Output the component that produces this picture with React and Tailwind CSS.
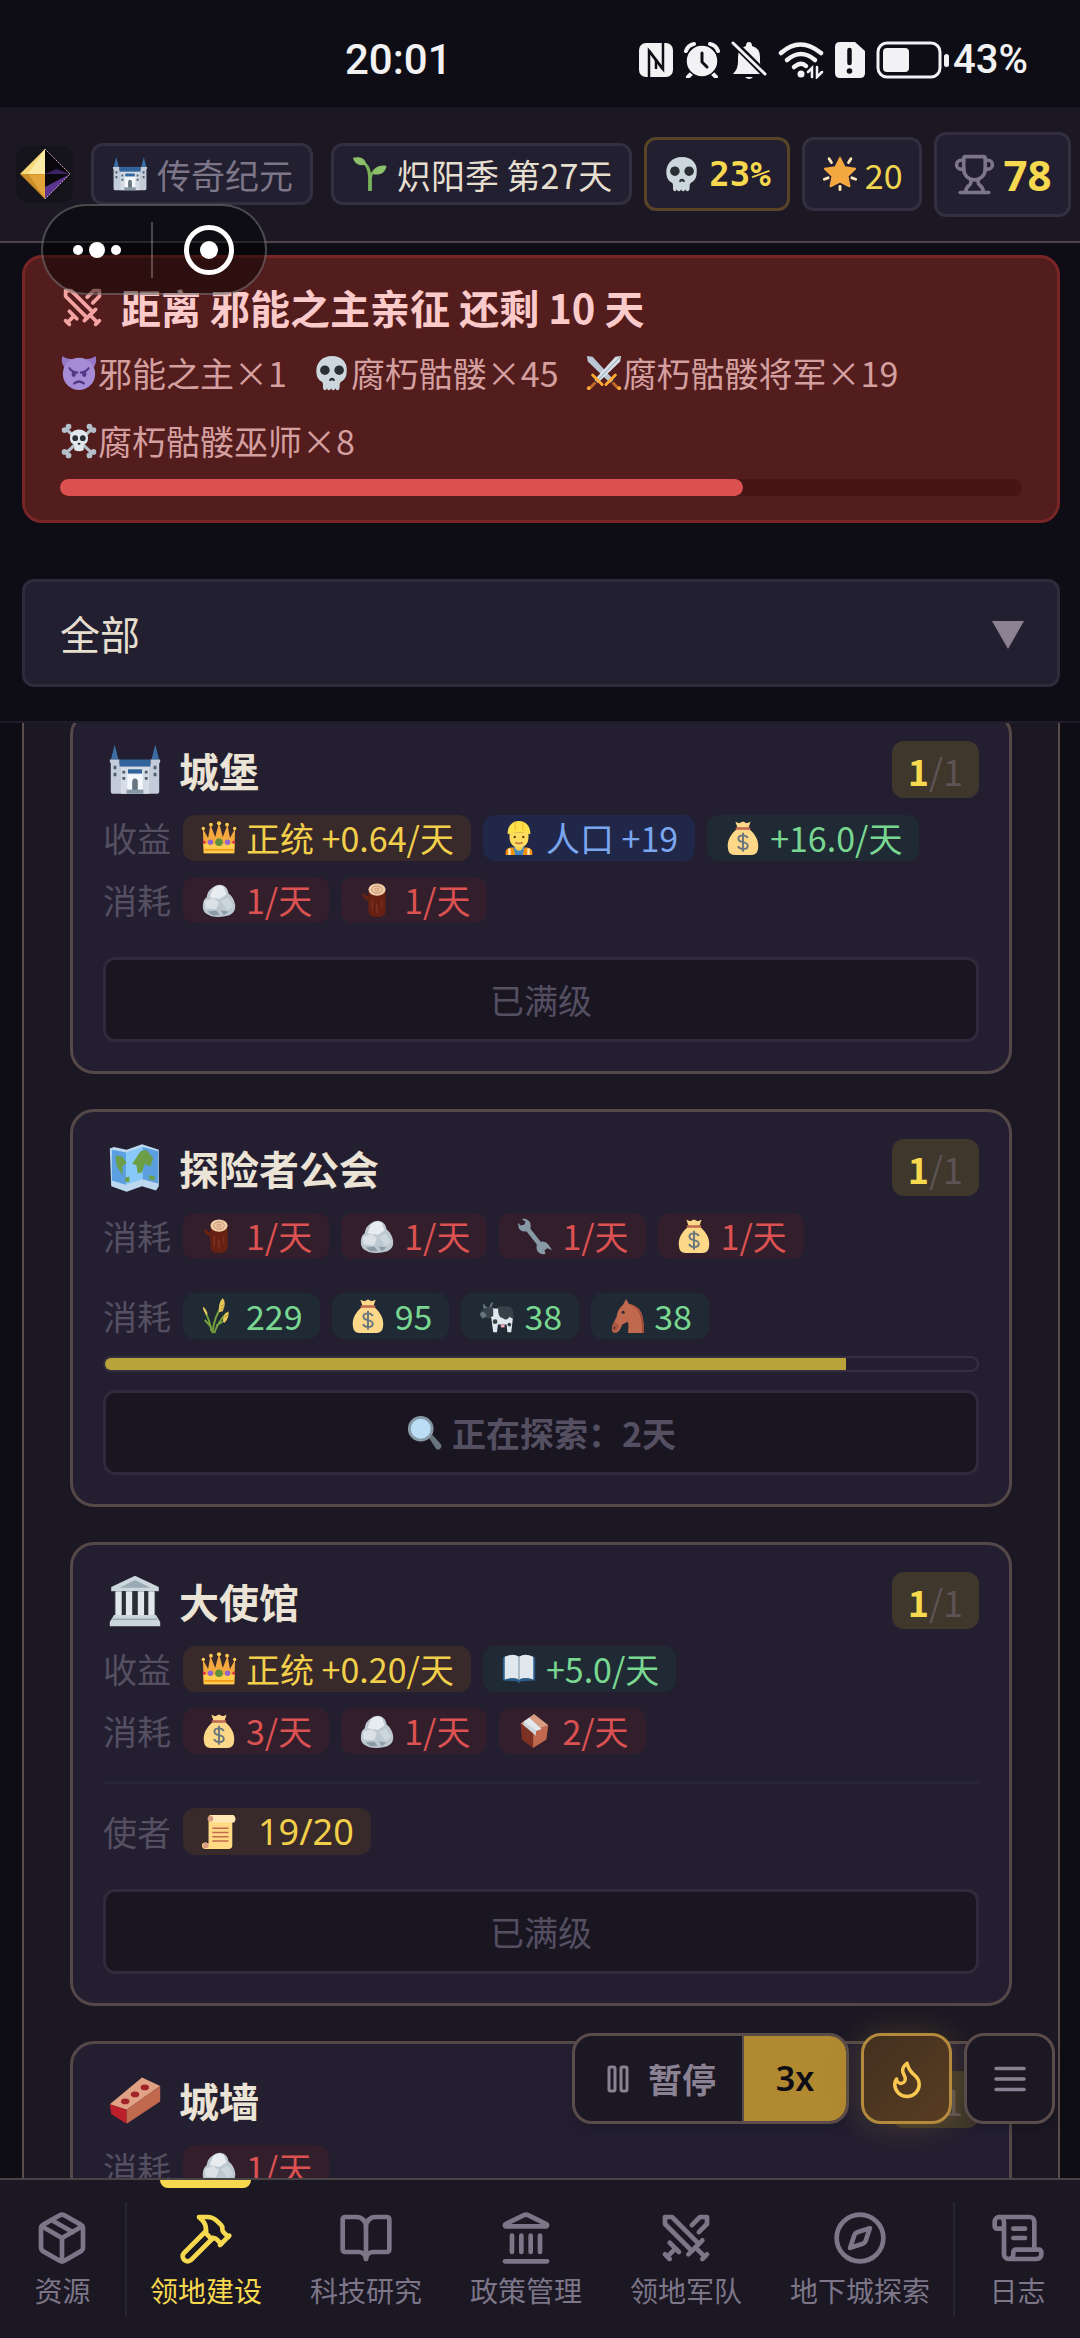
import { useLayoutEffect, useRef, useState } from 'react'
import { BookOpen, Compass, Flame, Hammer, Landmark, Package, ScrollText, Swords, Trophy } from 'lucide-react'

const glyphs = {
  castle: (
    <>
      <path d="M3.5 0 0.8 10.5H6.2ZM32.5 0 29.8 10.5h5.4Z" fill="#3a6ea5" />
      <path d="M0 10.5h7V14h22v-3.500h7V12l-.7 1.500V33.500q0 1.500-1.500 1.500H2.200Q.7 35 .7 33.500V13.500L0 12Z" fill="#c3ccd8" />
      <path d="M7 10.500h22v5H7Z" fill="#31639c" />
      <path d="M8 16h20v19H8Z" fill="#d5dce5" />
      <path d="M12.500 21h11v12h-11Z" fill="#f4f8fc" />
      <path d="M13 17.500h10v3H13Z" fill="#31639c" />
      <path d="M16 33v-6.500a2 2.500 0 0 1 4 0V33Z" fill="#66757f" />
      <path d="M12 32h12v3H12Z" fill="#8899a6" />
      <path d="M2.700 15h2v2.500h-2ZM2.700 20h2v2.500h-2ZM31.300 15h2v2.500h-2ZM31.300 20h2v2.500h-2ZM9 18.500h2v2H9ZM9 23h2v2H9ZM25 18.500h2v2h-2ZM25 23h2v2h-2Z" fill="#4c5f73" />
    </>
  ),
  sprout: (
    <>
      <path d="M16 36V21C15.500 12 13 8 7 5l1-2c7 3 10 7 11 14 2-4 5-6 9-7l1 2c-6 2-8.500 6-9 11v13Z" fill="#78b159" />
      <path d="M0 1C7-1 13 1 14 8 7 10 2 8 0 1ZM35.500 9.500C34 17 28 20 21 18 22 11 28 8 35.500 9.500Z" fill="#8cc06b" />
    </>
  ),
  skull: (
    <>
      <path d="M18 0C7.500 0 1.500 7 1.500 16c0 5 1.500 9 5.500 11 2 1 1.500 3 1.500 6 0 4 4 4 4 .5 0 3.500 4.500 3.500 4.500 0 0 3.500 4.500 3.500 4.500 0 0 3.500 4.500 3.500 4.500-.5 0-3 0-5 1.800-6 4.200-2 5.700-6 5.700-11C34.500 7 28.500 0 18 0Z" fill="#ccd6dd" />
      <circle cx="10.500" cy="15" r="5" fill="#292f33" />
      <circle cx="25.500" cy="15" r="5" fill="#292f33" />
      <path d="M15 26c0-4 6-4 6 0-1 1.200-2 .5-3-.6-1 1.100-2 1.800-3 .6Z" fill="#292f33" />
    </>
  ),
  star: (
    <>
      <path d="m18 1 4.800 9.700L34 12.500l-8 7.600 2 10.900-10-5-10 5 2-10.900-8-7.600 11.200-1.800Z" fill="#f4a940" stroke="#f4a940" strokeWidth="2" strokeLinejoin="round" />
      <path d="M18 31v3.500M6.500 2l2.500 4M29.500 2 27 6M1.500 23.500l4-1.500M34.500 23.500l-4-1.500" stroke="#ffe8b6" strokeWidth="3" strokeLinecap="round" />
    </>
  ),
  devil: (
    <>
      <path d="M.5 0Q-1.500 8 4 14L11 3Q5 4 .5 0ZM35.500 0q2 8-3.500 14L25 3q6 1 10.500-3Z" fill="#9578c8" />
      <circle cx="18" cy="19" r="17" fill="#a68bd6" />
      <path d="M8 13q2.500 4 8 4.500M28 13q-2.500 4-8 4.500M13 29q5-4 10 0" stroke="#553788" strokeWidth="2.400" strokeLinecap="round" fill="none" />
      <ellipse cx="12.500" cy="19" rx="2.200" ry="3" fill="#553788" />
      <ellipse cx="23.500" cy="19" rx="2.200" ry="3" fill="#553788" />
    </>
  ),
  blades: (
    <>
      <path d="M0 0 6 1 28 25l-3.500 3.500L1 6Z" fill="#b8c7d3" />
      <path d="M36 0 30 1 8 25l3.500 3.500L35 6Z" fill="#d7e1e8" />
      <path d="M35.500.5 10 27" stroke="#8899a6" strokeWidth="1" />
      <path d="m20 30 10-10M16 30 6 20" stroke="#ffac33" strokeWidth="3" strokeLinecap="round" />
      <path d="m27 28 6 6M9 28l-6 6" stroke="#be6d22" strokeWidth="3" />
      <circle cx="34" cy="34" r="2" fill="#ffac33" />
      <circle cx="2" cy="34" r="2" fill="#ffac33" />
    </>
  ),
  bones: (
    <>
      <path d="m4 5 28 26M32 5 4 31" stroke="#b4c0c9" strokeWidth="3.500" />
      <g fill="#b4c0c9">
        <circle cx="2.800" cy="6.500" r="3" /><circle cx="7" cy="2.800" r="3" />
        <circle cx="33.200" cy="6.500" r="3" /><circle cx="29" cy="2.800" r="3" />
        <circle cx="2.800" cy="29.500" r="3" /><circle cx="7" cy="33.200" r="3" />
        <circle cx="33.200" cy="29.500" r="3" /><circle cx="29" cy="33.200" r="3" />
      </g>
      <path d="M18 6c-6 0-9.500 4-9.500 9 0 3.500 1.500 5.500 4 6.500.8 1 .5 3 .5 6q5 2.500 10 0c0-3-.3-5 .5-6 2.500-1 4-3 4-6.500 0-5-3.500-9-9.500-9Z" fill="#e1e8ed" />
      <circle cx="14" cy="15" r="3" fill="#292f33" />
      <circle cx="22" cy="15" r="3" fill="#292f33" />
      <ellipse cx="18" cy="21" rx="1.500" ry="1.200" fill="#292f33" />
    </>
  ),
  crown: (
    <>
      <path d="M2 34 1 8l5.500 10L9 4l5 13 4-15 4 15 5-13 2.500 14L35 8l-1 26Z" fill="#f4a940" />
      <path d="m2 34-.5-10h33L34 34Z" fill="#ffcc4d" />
      <g fill="#ffcc4d">
        <circle cx="1.500" cy="8" r="1.800" /><circle cx="9.500" cy="4" r="2" /><circle cx="18" cy="2.500" r="2.200" />
        <circle cx="26.500" cy="4" r="2" /><circle cx="34.500" cy="8" r="1.800" />
      </g>
      <circle cx="18" cy="22.500" r="4" fill="#5c913b" />
      <circle cx="9" cy="22.500" r="2.800" fill="#9266cc" />
      <circle cx="27" cy="22.500" r="2.800" fill="#9266cc" />
      <circle cx="2.500" cy="22.500" r="1.500" fill="#dd2e44" />
      <circle cx="33.500" cy="22.500" r="1.500" fill="#dd2e44" />
      <path d="M2.500 30.500h31" stroke="#f4900c" strokeWidth="1.500" />
    </>
  ),
  worker: (
    <>
      <path d="M4 36v-3q0-4 5-5h18q5 1 5 5v3Z" fill="#f4900c" />
      <path d="M12 27h12l-2 9h-8Z" fill="#4289c1" />
      <path d="M8 29v7M28 29v7" stroke="#ffe8b6" strokeWidth="2.500" />
      <path d="M14 23h8v6q-4 5-8 0Z" fill="#f9ca55" />
      <path d="M8 12v5c0 7 4 11 10 11s10-4 10-11v-5Z" fill="#ffdc5d" />
      <path d="M6 14C6 5 11 0 18 0s12 5 12 14q-12-4-24 0Z" fill="#ffe14d" />
      <path d="M14 1v9M22 1v9" stroke="#f4c430" strokeWidth="1.500" />
      <circle cx="13.500" cy="17" r="1.300" fill="#664500" />
      <circle cx="22.500" cy="17" r="1.300" fill="#664500" />
      <path d="M14 22.500q4 2.500 8 0" stroke="#c1694f" strokeWidth="1.500" fill="none" />
    </>
  ),
  bag: (
    <>
      <path d="M12 8C4 15 1.500 21 2 28q.5 8 7 8h18q6.500 0 7-8c.5-7-2-13-10-20Z" fill="#fdd888" />
      <path d="m10 1 4 1.500L18 .5l4 2L26 1l-2.500 7h-11Z" fill="#fdd888" />
      <path d="M11.500 8h13" stroke="#bf6952" strokeWidth="2.500" strokeLinecap="round" />
      <path d="M23 18q-1.500-2.800-5-2.800-4.800 0-4.800 3.300 0 3 4.800 3.800 5 .8 5 4t-5 3.300q-4 0-5.200-3M18 12.500v20" stroke="#67757f" strokeWidth="2" fill="none" />
    </>
  ),
  rock: (
    <>
      <path d="M11 5q6-5 12-2 4 2 5 8 6 5 7 12 1 8-6 11-10 3-19 1Q0 32 1 24q0-6 4-9 1-7 6-10Z" fill="#bcc7d0" />
      <path d="M12 5q6-4 11-1l3 8-7 5-11-2Z" fill="#e6ecf0" />
      <path d="m3 19 9-3 6 4-3 8-11-1Z" fill="#dbe2e7" />
      <path d="m20 19 7-4 6 9-6 5Z" fill="#ccd6dd" />
      <path d="m6 30 9-1 4 5H11ZM20 29l8 1-5 4Z" fill="#8b9aa7" />
    </>
  ),
  log: (
    <>
      <path d="M9 8v22q1 6 9 6t9-6V8Z" fill="#662113" />
      <path d="m10 20-6-4-2-4 2-1 6 5Z" fill="#662113" />
      <path d="M13 18v11M18 22v10M23 19v6" stroke="#853425" strokeWidth="1.200" />
      <ellipse cx="18" cy="7" rx="9" ry="6.500" fill="#f0cfa8" />
      <ellipse cx="18" cy="7" rx="5.500" ry="3.800" fill="none" stroke="#c1886b" strokeWidth="1" />
      <ellipse cx="18" cy="7" rx="2.300" ry="1.500" fill="none" stroke="#c1886b" strokeWidth="1" />
    </>
  ),
  map: (
    <>
      <path d="m0 4 3-1 9 2 11-4 12 4v26l-2 3-10-3-11 4L1 31Z" fill="#bdd7ee" />
      <path d="m1.500 5 10 2 12-4 11 3v23l-11-3-12 4-10-3Z" fill="#88c9f9" />
      <path d="m23.500 3 11 3v23l-11-3ZM1.500 5l10 2v23l-10-3Z" fill="#5c9fe0" />
      <path d="m4 9 5 1 3 4-3 3v6l-4-6ZM16 15l6-9 4-1 5 6-2 6-4-2-2 6-3 1-1-6ZM28 23l4 1v3l-4-1ZM11 25l3-1v4h-3Z" fill="#6b9e47" />
    </>
  ),
  wrench: (
    <path d="M4 0q6-1 9 4 1 3 0 6l11 14q5-1 8 3l4 6-5-2-3 2 1 4q-6 1-9-4-1-3 0-6L9 13q-5 1-8-3L0 4l3 3 4-1 1-3Z" fill="#8899a6" />
  ),
  wheat: (
    <>
      <path d="M11 36Q13 18 22 6M13 36Q17 24 26 15M10 34Q8 22 4 15M3 22l7 8M15 28l7-4" stroke="#77a43c" strokeWidth="2" fill="none" />
      <path d="M18 14Q17 4 22-1q4 5 0 14ZM22 24q0-8 6-11 1 7-4 12ZM5 17q-4-4-4-9 4 3 5 8Z" fill="#e6c75a" />
      <path d="m20 8 3-2M20 11l3-2M24 19l3-2" stroke="#b58c2c" strokeWidth="1" />
    </>
  ),
  cow: (
    <>
      <path d="M10 10h20q5 1 5 8l-2 17h-4l-1-8h-9l-1 8h-4l-2-15-5-3-4-3 3-6Z" fill="#e1e8ed" />
      <path d="M19 8h12q5 2 4 13l-4-2q-3 5-7 1-5 1-5-12ZM1 13l5-4 4-1 4 3v7l-5 3-6-3Z" fill="#38424a" />
      <path d="m5 10-1-4M11 9l2-5" stroke="#66757f" strokeWidth="2" />
      <circle cx="16" cy="24" r="2.500" fill="#38424a" />
      <circle cx="31" cy="27" r="2" fill="#38424a" />
      <path d="M1 14q5-1 6 4l-4 3-3-4Z" fill="#66757f" />
      <path d="M22 27h4v3h-4Z" fill="#f4abba" />
    </>
  ),
  horse: (
    <>
      <path d="m14 6 3-6 3 5q11 2 14 12 2 8 2 19H19q1-8 0-12l-6 3q-2 6-5 8-6 2-6-3 0-4 5-13 1-8 7-13Z" fill="#c1694f" />
      <path d="M19 5q10 1 14 11 3 9 3 20h-2q0-16-4-23-4-6-11-8Z" fill="#9c4a36" />
      <path d="M2 29q1-3 3-5l5 4-3 6q-5 1-5-5Z" fill="#a85641" />
      <circle cx="14" cy="14" r="1.600" fill="#292f33" />
      <path d="m4 30 1.500 1" stroke="#292f33" strokeWidth="1.500" />
    </>
  ),
  search: (
    <>
      <path d="m22 23 4-3 9 10q1 3-1 4.500t-4 .5Z" fill="#66757f" />
      <circle cx="13.500" cy="13.500" r="13.500" fill="#8899a6" />
      <circle cx="13.500" cy="13.500" r="10.500" fill="#bbddf5" />
    </>
  ),
  temple: (
    <>
      <path d="M18 0 35 8v3H1V8Z" fill="#ccd6dd" />
      <path d="M18 3 29 8.500H7Z" fill="#9aaab4" />
      <path d="M3 11h30v17H3Z" fill="#292f33" />
      <path d="M4 11h4.500v18H4ZM11.500 11H16v18h-4.500ZM20 11h4.500v18H20ZM27.500 11H32v18h-4.500Z" fill="#e1e8ed" />
      <path d="M3 28h30l3 5v3H0v-3Z" fill="#ccd6dd" />
      <path d="M2 31h32" stroke="#9aaab4" strokeWidth="1" />
    </>
  ),
  book: (
    <>
      <path d="M1 7q0-2 2-2h30q2 0 2 2v23l-15 1-2 2-2-2-15-1Z" fill="#2b5c8a" />
      <path d="M3 5q9-4 15 0v24q-7-3-15 0ZM33 5q-9-4-15 0v24q7-3 15 0Z" fill="#e1e8ed" />
      <path d="M18 5v24" stroke="#99aab5" strokeWidth="1.500" />
    </>
  ),
  crate: (
    <>
      <path d="m3 10 13 8v18L4 27Z" fill="#7c3123" />
      <path d="m16 18 16-6-2 15-14 9Z" fill="#c1694f" />
      <path d="M17 0 32 12l-16 6L3 10Z" fill="#d99e82" />
      <path d="m6 8 6-4 13 12-6 2Z" fill="#e1e8ed" />
      <path d="m6 8 13 10v5L6 12Z" fill="#ccd6dd" />
    </>
  ),
  brick: (
    <>
      <path d="M0 21 23 2l13 6L12 25Z" fill="#e0a184" />
      <path d="m0 21 12 4v10L1 28Z" fill="#bb1f2b" />
      <path d="M12 25 36 8v11L12 35Z" fill="#c1694f" />
      <ellipse cx="11" cy="19" rx="3" ry="2" fill="#a0252b" />
      <ellipse cx="18" cy="14" rx="3" ry="2" fill="#a0252b" />
      <ellipse cx="25" cy="9" rx="3" ry="2" fill="#a0252b" />
    </>
  ),
  scroll: (
    <>
      <path d="M8 0h25q3 2 2 6l-3 2v24q0 4-4 4H3q-3-1-3-4t4-3l3 1V5Z" fill="#ffd983" />
      <path d="M10 8h24q2-2 1-5l-2-3H10Z" fill="#ffe8b6" />
      <circle cx="9" cy="4" r="3" fill="#d99e82" />
      <circle cx="4" cy="32" r="3" fill="#d99e82" />
      <path d="M11 14h17M11 18.500h17M11 23h17M11 27.500h17" stroke="#c1694f" strokeWidth="1.500" />
    </>
  ),
}

function Glyph({ name, className = 'size-[38px]' }) {
  return (
    <svg viewBox="-2 -2 40 40" className={`shrink-0 ${className}`} aria-hidden="true">
      {glyphs[name]}
    </svg>
  )
}

const tones = {
  gold: 'bg-[#38292a] text-[#f2cf4a]',
  blue: 'bg-[#202748] text-[#7aa5ef]',
  green: 'bg-[#1f2a34] text-[#79d791]',
  red: 'bg-[#331f2c] text-[#dc5151]',
}

const buildings = [
  {
    name: '城堡',
    icon: 'castle',
    rows: [
      { label: '收益', chips: [['crown', '正统 +0.64/天', 'gold'], ['worker', '人口 +19', 'blue'], ['bag', '+16.0/天', 'green']] },
      { label: '消耗', chips: [['rock', '1/天', 'red'], ['log', '1/天', 'red']] },
    ],
    action: '已满级',
  },
  {
    name: '探险者公会',
    icon: 'map',
    rows: [
      { label: '消耗', chips: [['log', '1/天', 'red'], ['rock', '1/天', 'red'], ['wrench', '1/天', 'red'], ['bag', '1/天', 'red']] },
    ],
    quest: { label: '消耗', chips: [['wheat', '229', 'green'], ['bag', '95', 'green'], ['cow', '38', 'green'], ['horse', '38', 'green']] },
    progress: 85,
    action: '正在探索：2天',
  },
  {
    name: '大使馆',
    icon: 'temple',
    rows: [
      { label: '收益', chips: [['crown', '正统 +0.20/天', 'gold'], ['book', '+5.0/天', 'green']] },
      { label: '消耗', chips: [['bag', '3/天', 'red'], ['rock', '1/天', 'red'], ['crate', '2/天', 'red']] },
    ],
    envoys: '19/20',
    action: '已满级',
  },
  {
    name: '城墙',
    icon: 'brick',
    rows: [{ label: '消耗', chips: [['rock', '1/天', 'red']] }],
    action: '已满级',
  },
]

const enemies = [
  ['devil', '邪能之主×1'],
  ['skull', '腐朽骷髅×45'],
  ['blades', '腐朽骷髅将军×19'],
  ['bones', '腐朽骷髅巫师×8'],
]

const tabs = [
  { id: 'build', label: '领地建设', Icon: Hammer },
  { id: 'tech', label: '科技研究', Icon: BookOpen },
  { id: 'policy', label: '政策管理', Icon: Landmark },
  { id: 'army', label: '领地军队', Icon: Swords },
  { id: 'dungeon', label: '地下城探索', Icon: Compass },
]

function StatusBar() {
  return (
    <div className="relative flex h-[107px] items-center justify-end gap-[11px] pt-3 pr-[52px] text-[#f2f2f4]">
      <span className="absolute left-[345px] font-['Roboto',sans-serif] text-[42px] font-medium">20:01</span>
      <svg viewBox="0 0 34 34" className="size-[34px]">
        <rect width="34" height="34" rx="7" fill="currentColor" />
        <path d="M10 34V8l14 18.500M24 0v26L10 7.500" fill="none" stroke="#0e0d15" strokeWidth="2.500" />
        <path d="M17 16v10" stroke="#0e0d15" strokeWidth="2.500" />
      </svg>
      <svg viewBox="0 0 36 36" className="size-9" fill="none" stroke="currentColor" strokeLinecap="round">
        <path d="M2 9q2-6 8-7M34 9q-2-6-8-7M8 31l-4 4M28 31l4 4" strokeWidth="4" />
        <circle cx="18" cy="19" r="16" fill="currentColor" stroke="#0e0d15" strokeWidth="1.500" />
        <path d="M18 11v9l5 5" stroke="#0e0d15" strokeWidth="3" />
      </svg>
      <svg viewBox="0 0 36 40" className="h-10 w-9">
        <path d="M2 34q5-5 5-12v-5q0-9 8-11 0-4 3-4t3 4q8 2 8 11v5q0 7 5 12Z" fill="currentColor" />
        <path d="M14 37h8q-4 4-8 0Z" fill="currentColor" />
        <path d="m0 0 36 36" stroke="#0e0d15" strokeWidth="7" />
        <path d="m2 3 32 31" stroke="currentColor" strokeWidth="3" strokeLinecap="round" />
      </svg>
      <svg viewBox="0 0 46 38" className="h-[38px] w-[46px]" fill="none" stroke="currentColor" strokeLinecap="round">
        <path d="M3 12q19-17 40 0" strokeWidth="4.500" />
        <path d="M9 19q14-12 28 0M16 26q7-6 12-1" strokeWidth="4.500" />
        <circle cx="23" cy="33" r="3.500" fill="currentColor" stroke="none" />
        <path d="m30 31 4-4v9M39 26v10l5-5" strokeWidth="2.500" />
      </svg>
      <svg viewBox="0 0 30 38" className="h-[38px] w-[30px]">
        <path d="M5 1h15l10 9v22q0 5-5 5H5q-5 0-5-5V6q0-5 5-5Z" fill="currentColor" />
        <path d="M14.500 9v13" stroke="#0e0d15" strokeWidth="4.500" strokeLinecap="round" />
        <circle cx="14.500" cy="30" r="2.800" fill="#0e0d15" />
      </svg>
      <svg viewBox="0 0 74 38" className="h-[38px] w-[74px]">
        <rect x="2" y="2" width="62" height="34" rx="9" fill="none" stroke="currentColor" strokeWidth="3" />
        <rect x="7" y="7" width="26" height="24" rx="4" fill="currentColor" />
        <rect x="68" y="13" width="5" height="13" rx="2.500" fill="currentColor" />
      </svg>
      <span className="-ml-2 font-['Roboto',sans-serif] text-[40px] font-medium">43%</span>
    </div>
  )
}

function Header() {
  const pill = 'flex items-center rounded-xl border-3 bg-[#221f31] whitespace-nowrap'
  return (
    <header className="flex h-[136px] items-center gap-3 border-b-2 border-[#4d4447] bg-[#1b1824] pr-1.5 pl-4">
      <div className="mr-1.5 flex size-[57px] shrink-0 items-center justify-center rounded-xl bg-[#16141b]">
        <svg viewBox="0 0 50 50" className="size-[50px]">
          <path d="M25 0 0 25h25Z" fill="#f6d878" />
          <path d="M0 25h25v25Z" fill="#c98d2b" />
          <path d="M25 0 8 25h17Z" fill="#fbeaa6" />
          <path d="M25 25 9 26l16 24Z" fill="#e3a53a" />
          <path d="M25 0 50 25 25 50Z" fill="#0a070d" />
          <path d="M50 25 25 50V38Z" fill="#5b358f" />
          <path d="m25 25 25 0-14-5Z" fill="#3a2363" />
          <path d="M25 0 50 25 25 50" fill="none" stroke="#c9a3b8" strokeWidth="1" strokeDasharray="2 1" />
        </svg>
      </div>
      <div className={`${pill} mr-1.5 h-[62px] gap-2 border-[#332f41] px-[17px] text-[#7c7688]`}>
        <Glyph name="castle" />
        传奇纪元
      </div>
      <div className={`${pill} h-[62px] gap-2 border-[#332f41] px-[17px] text-[#e6dfd0]`}>
        <Glyph name="sprout" />
        炽阳季 第27天
      </div>
      <div className={`${pill} h-[74px] gap-2 border-[#5a4427] px-4 font-['DejaVu_Sans_Mono',monospace] font-bold text-[#f7d94f]`}>
        <Glyph name="skull" />
        23%
      </div>
      <div className={`${pill} h-[74px] gap-1.5 border-[#332f41] px-4 text-[#f2d64f]`}>
        <Glyph name="star" />
        20
      </div>
      <div className={`${pill} h-[85px] gap-2 border-[#332f41] px-4 font-['Noto_Sans',sans-serif] text-[42px] font-bold text-[#f7d94f]`}>
        <Trophy className="size-[43px] shrink-0 text-[#7c7688]" strokeWidth={2} />
        78
      </div>
    </header>
  )
}

function Invasion() {
  return (
    <section className="mt-3 mr-5 ml-[22px] rounded-[20px] border-3 border-[#782526] bg-[#531c1d] px-[35px] pt-[23px] pb-6">
      <h2 className="mb-1.5 flex items-center gap-4 text-[40px] leading-[52px] font-semibold text-[#fbcaca]">
        <Swords className="size-[45px] text-[#f4a3a3]" strokeWidth={2} />
        距离 邪能之主亲征 还剩 10 天
      </h2>
      <ul className="flex flex-wrap gap-x-[26px] leading-[68px] text-[#d39f9f]">
        {enemies.map(([icon, text]) => (
          <li key={text} className="flex items-center">
            <Glyph name={icon} />
            {text}
          </li>
        ))}
      </ul>
      <div className="mt-1 h-[17px] rounded-full bg-[#461514]">
        <div className="h-full rounded-full bg-[#dc514f]" style={{ width: '71%' }} />
      </div>
    </section>
  )
}

function ChipRow({ label, chips }) {
  return (
    <div className="flex items-center gap-3 leading-[46px] text-[#554f62]">
      {label}
      {chips.map(([icon, text, tone], i) => (
        <span key={i} className={`flex h-[46px] items-center gap-2 rounded-xl px-[17px] whitespace-nowrap ${tones[tone]}`}>
          <Glyph name={icon} />
          {text}
        </span>
      ))}
    </div>
  )
}

function BuildingCard({ item }) {
  return (
    <article className="rounded-3xl border-3 border-[#544848] bg-[#231f31] px-[30px] pt-[27px] pb-[29px]">
      <div className="flex h-[57px] items-center gap-4 pl-1">
        <Glyph name={item.icon} className="size-14" />
        <h3 className="text-[40px] font-bold text-[#ebe3d5]">{item.name}</h3>
        <span className="ml-auto flex h-full items-center rounded-xl bg-[#3f372c] px-4 text-[36px] text-[#5d5355]">
          <b className="text-[#f7d94f]">1</b>/1
        </span>
      </div>
      <div className="mt-[17px] flex flex-col gap-4">
        {item.rows.map((row, i) => (
          <ChipRow key={i} {...row} />
        ))}
      </div>
      {item.quest && (
        <div className="-mb-4 pt-[34px]">
          <ChipRow {...item.quest} />
          <div className="mt-[17px] h-4 overflow-hidden rounded-full border-2 border-[#332f41]">
            <div className="h-full bg-[#b8a239]" style={{ width: `${item.progress}%` }} />
          </div>
        </div>
      )}
      {item.envoys && (
        <div className="mt-7 flex items-center gap-3 border-t-2 border-[#282537] pt-6 leading-[46px] text-[#554f62]">
          使者
          <span className="flex h-[47px] items-center gap-5 rounded-xl bg-[#38292a] px-[17px] font-['Noto_Sans',sans-serif] text-[36px] text-[#f2cf4a]">
            <Glyph name="scroll" />
            {item.envoys}
          </span>
        </div>
      )}
      <button
        disabled
        className={`mt-[34px] flex h-[85px] w-full items-center justify-center gap-2 rounded-xl border-3 border-[#2f2b3d] bg-[#191622] text-[#554f62] ${item.quest ? 'font-semibold' : ''}`}
      >
        {item.quest && <Glyph name="search" />}
        {item.action}
      </button>
    </article>
  )
}

function SpeedControls() {
  const box = 'flex h-[91px] items-center justify-center rounded-[20px] border-3'
  return (
    <div className="absolute right-[25px] bottom-[54px] flex gap-3">
      <div className={`${box} overflow-hidden border-[#5a4c4b] bg-[#1b1824] shadow-lg`}>
        <button className="flex h-full items-center gap-3 border-r-2 border-[#5a4c4b] pr-[26px] pl-[25px] font-semibold text-[#8a8292]">
          <svg viewBox="0 0 24 24" className="size-9" fill="none" stroke="currentColor" strokeWidth="2">
            <rect x="6" y="4" width="4" height="16" rx="1" />
            <rect x="14" y="4" width="4" height="16" rx="1" />
          </svg>
          暂停
        </button>
        <button className="h-full w-[102px] bg-[#b08930] font-['Noto_Sans',sans-serif] font-semibold text-[#0e0d15]">3x</button>
      </div>
      <button aria-label="战斗" className={`${box} w-[91px] border-[#b48a3c] bg-linear-to-br from-[#44301f] to-[#573c22] text-[#f9c851] shadow-[0_0_32px_#b8902840]`}>
        <Flame className="size-[42px]" strokeWidth={2} />
      </button>
      <button aria-label="菜单" className={`${box} w-[91px] border-[#5a4c4b] bg-[#1b1824] text-[#8a8292] shadow-lg`}>
        <svg viewBox="0 0 24 24" className="size-[42px]" fill="none" stroke="currentColor" strokeWidth="2" strokeLinecap="round">
          <path d="M4 6h16M4 12h16M4 18h16" />
        </svg>
      </button>
    </div>
  )
}

function NavItem({ label, Icon, active, onClick }) {
  return (
    <button
      onClick={onClick}
      className={`relative flex h-full flex-col items-center justify-center gap-1.5 px-[23px] text-[28px] leading-9 whitespace-nowrap ${active ? 'text-[#f7d94f]' : 'text-[#7c7688]'}`}
    >
      {active && <span className="absolute top-0 h-2 w-[91px] rounded-b-lg bg-[#f7d94f]" />}
      <Icon className="size-14" strokeWidth={2} />
      {label}
    </button>
  )
}

export default function App() {
  const [tab, setTab] = useState('build')
  const listRef = useRef(null)

  // open the list at the first building, past the panel's top edge
  useLayoutEffect(() => {
    listRef.current.scrollTop = 60
  }, [])

  return (
    <div className="relative flex h-screen flex-col overflow-hidden bg-[#0e0d15] font-['Noto_Sans_CJK_SC',sans-serif] text-[34px] leading-normal">
      <StatusBar />
      <Header />
      <Invasion />

      <div className="mt-14 mr-5 mb-[34px] ml-[22px]">
        <label htmlFor="filter" className="sr-only">分类</label>
        <div className="relative">
          <select id="filter" className="block h-[108px] w-full appearance-none rounded-xl border-3 border-[#2f2b3d] bg-[#221f31] px-[35px] text-[40px] text-[#e6dfd0]">
            <option>全部</option>
          </select>
          <svg viewBox="0 0 32 28" className="pointer-events-none absolute top-[42px] right-9 h-7 w-8">
            <path d="M0 0h32L16 28Z" fill="#8a8292" />
          </svg>
        </div>
      </div>

      <main className="relative min-h-0 flex-1 border-t-2 border-[#1f1c29]">
        <div ref={listRef} className="h-full overflow-y-auto pr-5 pl-[22px] [scrollbar-width:none]">
          <div className="flex flex-col gap-[35px] border-2 border-[#5a4c4b] bg-[#1b1824] p-[46px]">
            {buildings.map((b) => (
              <BuildingCard key={b.name} item={b} />
            ))}
          </div>
        </div>
        <SpeedControls />
      </main>

      <nav className="flex h-40 shrink-0 items-center border-t-2 border-[#4a4346] bg-[#1b1824]">
        <div className="flex h-full flex-1 justify-center">
          <NavItem label="资源" Icon={Package} />
        </div>
        <div className="h-[114px] w-0.5 bg-[#282534]" />
        <div className="flex h-full gap-0.5">
          {tabs.map((t) => (
            <NavItem key={t.id} {...t} active={tab === t.id} onClick={() => setTab(t.id)} />
          ))}
        </div>
        <div className="h-[114px] w-0.5 bg-[#282534]" />
        <div className="flex h-full flex-1 justify-center">
          <NavItem label="日志" Icon={ScrollText} />
        </div>
      </nav>

      <div className="absolute top-[204px] left-[41px] flex h-[91px] w-[226px] items-center rounded-full border-2 border-white/25 bg-black/45">
        <button aria-label="更多" className="flex w-[108px] items-center justify-center gap-1.5">
          <span className="size-2.5 rounded-full bg-white" />
          <span className="size-4 rounded-full bg-white" />
          <span className="size-2.5 rounded-full bg-white" />
        </button>
        <span className="h-14 w-0.5 bg-white/25" />
        <button aria-label="关闭" className="flex flex-1 items-center justify-center">
          <span className="flex size-[50px] items-center justify-center rounded-full border-5 border-white">
            <span className="size-[18px] rounded-full bg-white" />
          </span>
        </button>
      </div>
    </div>
  )
}
